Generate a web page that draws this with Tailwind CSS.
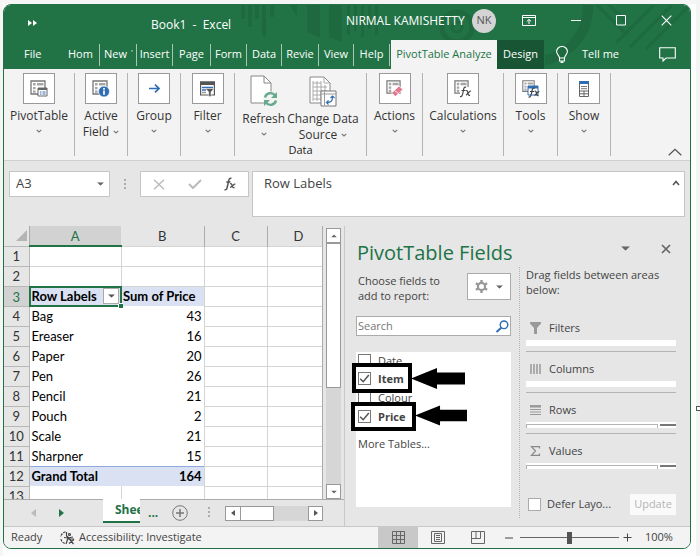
<!DOCTYPE html>
<html lang="en">
<head>
<meta charset="utf-8">
<title>Book1 - Excel</title>
<script src="https://cdn.jsdelivr.net/npm/@tailwindcss/browser@4"></script>
</head>
<body class="relative bg-[#fdfdfd] pt-1 pl-[3px] pr-[9px] pb-[7px] font-['Open_Sans','Noto_Sans',sans-serif] text-xs text-[#444] border-0">
<svg width="0" height="0" class="absolute" aria-hidden="true">
  <defs>
    <symbol id="chev" viewBox="0 0 6 4"><path d="M.7.8 3 3 5.3.8" fill="none" stroke="#777" stroke-width="1.1"/></symbol>
    <symbol id="down" viewBox="0 0 8 4"><path d="M0 0h8L4 4z" fill="currentColor"/></symbol>
    <symbol id="tick" viewBox="0 0 12 12"><path d="M2 6.2 4.8 9 10 2.8" fill="none" stroke="#555" stroke-width="1.4"/></symbol>
    <symbol id="sheet" viewBox="0 0 16 16"><path d="M1 1h14v13H1z" fill="#fff" stroke="#777" stroke-width="1.3"/><path d="M3 3h2.600v2.600H3zM7 3h6.500v2.600H7zM3 7h2.600v2.300H3zM3 10.500h2.600v2.300H3z" fill="#a6a6a6"/></symbol>
  </defs>
</svg>
<div class="absolute inset-x-0 top-0 h-1 bg-[#f5f5f5]"></div>
<div class="absolute inset-y-0 left-0 w-[3px] bg-[#f5f5f5]"></div>
<div class="absolute inset-y-0 right-0 w-1 bg-[#f4f4f4]"></div>
<div class="absolute right-0 top-[406px] h-[5px] w-1 border border-r-0 border-[#555] bg-white"></div>

<div class="relative flex flex-col overflow-hidden rounded-lg border border-[#217346] bg-[#e6e6e6]">
  <header class="relative bg-[#217346] text-white">
    <svg class="absolute right-0 top-0 h-16 w-[460px]" viewBox="0 0 460 64" aria-hidden="true">
      <g fill="#1e693f">
        <path d="M11 0h4v14h-4zM18 0h4v22h-4zM25 0h4v14h-4zM32 0h4v32l-4-2zM40 0h4v12h-4zM60 0h7v12zM77 0h13v33l-13-6zM99 0h13v37l-13-5z"/>
        <path d="M117 0h3v30h-3zM124 0h3v26h-3zM131 0h3v32h-3zM138 0h3v24h-3zM145 0h3v30h-3z"/>
      </g>
      <g fill="none" stroke="#1e693f">
        <circle cx="227" cy="22" r="15" stroke-width="5"/><circle cx="227" cy="22" r="5" stroke-width="3"/>
        <path d="M358 0a54 54 0 0 1-56 56" stroke-width="10"/>
        <path d="M367 0l30 30M379 0l18 18M400 42 442 0M386 38 424 0M416 44 460 0" stroke-width="3"/>
      </g>
    </svg>
    <div class="relative flex h-[35px] items-center">
      <button class="ml-6 w-[123px]" aria-label="More commands"><svg class="h-[6px] w-[9px]" viewBox="0 0 9 6"><path d="M0 0v6l4-3zM5 0v6l4-3z" fill="#fff"/></svg></button>
      <h1 class="w-[195px] whitespace-pre pt-1">Book1  -  Excel</h1>
      <span class="w-[126px] whitespace-nowrap pb-1">NIRMAL KAMISHETTY</span>
      <button class="-mt-1 flex size-6 shrink-0 items-center justify-center rounded-full bg-[#d4d4d4] text-[11px] text-[#555]">NK</button>
      <div class="-mt-1 ml-auto flex items-center pr-[18px]">
        <button class="mr-[35px]" aria-label="Ribbon display options"><svg class="h-[11px] w-[14px]" viewBox="0 0 14 11" fill="none" stroke="#fff"><path d="M.5.5h13v10H.5zM.5 2.5h13M7 9V4.5M4.800 6.500 7 4.400l2.200 2.100"/></svg></button>
        <button class="mr-[35px]" aria-label="Minimize"><svg class="h-[11px] w-[10px]" viewBox="0 0 10 11"><path d="M0 5.500h10" stroke="#fff"/></svg></button>
        <button class="mr-[34px]" aria-label="Maximize"><svg class="size-[11px]" viewBox="0 0 11 11"><path d="M.5.500h9v9.500h-9z" fill="none" stroke="#fff"/></svg></button>
        <button aria-label="Close"><svg class="size-[11px]" viewBox="0 0 11 11"><path d="m.7.7 9.600 9.600m0-9.600L.7 10.300" stroke="#fff" stroke-width="1.100"/></svg></button>
      </div>
    </div>
    <nav class="relative flex h-[29px] items-center whitespace-nowrap text-[11px]">
      <button class="w-[58px] pl-5 text-left">File</button>
      <button class="h-[22px] w-[38px] border-r border-white/60 pl-[6px] text-left">Hom</button>
      <button class="h-[22px] w-[37px] border-r border-white/60 pl-1 text-left">New<span class="ml-1 align-top text-[8px]">'</span></button>
      <button class="h-[22px] w-9 border-r border-white/60 text-center">Insert</button>
      <button class="h-[22px] w-[38px] border-r border-white/60 text-center">Page</button>
      <button class="h-[22px] w-9 border-r border-white/60 text-center">Form</button>
      <button class="h-[22px] w-[35px] border-r border-white/60 text-center">Data</button>
      <button class="h-[22px] w-[37px] border-r border-white/60 text-center">Revie</button>
      <button class="h-[22px] w-[35px] border-r border-white/60 text-center">View</button>
      <button class="h-[22px] w-9 border-r border-white/60 text-center">Help</button>
      <button class="ml-px h-full w-[106px] bg-[#f3f3f3] text-center text-[#217346]">PivotTable Analyze</button>
      <button class="h-full w-12 border-r border-[#217346] bg-[#185535] text-center">Design</button>
      <button class="ml-[11px] flex items-center gap-[14px]"><svg class="h-[17px] w-3" viewBox="0 0 12 17" fill="none" stroke="#fff" stroke-width="1.1"><path d="M3.500 12c0-2.600-2.900-3.300-2.900-6.400a5.400 5.100 0 0 1 10.800 0c0 3.100-2.900 3.800-2.900 6.400zM3.500 12v3h5v-3M4.500 16.400h3"/></svg>Tell me</button>
      <button class="ml-auto mr-[14px]" aria-label="Comments"><svg class="h-[15px] w-[17px]" viewBox="0 0 17 15"><path d="M.7.7h15.600v10.300H7l-3 3v-3H.700z" fill="none" stroke="#fff" stroke-width="1.100"/></svg></button>
    </nav>
  </header>

  <section class="relative flex h-[92px] border-b border-[#d0d0d0] bg-[#f3f3f3] pt-1 pb-1 leading-4 text-[#333]">
    <button class="flex w-[71px] flex-col items-center border-r border-[#b4b4b4]">
      <span class="mb-1 flex h-[31px] w-8 shrink-0 items-center justify-center border border-[#999] bg-white"><svg class="size-[18px]" viewBox="0 0 18 18"><use href="#sheet" width="16" height="16"/><path d="M8 8h9v8H8z" fill="#fff" stroke="#666"/><path d="M8 8h9v2H8z" fill="#666"/><path d="M10 12h1.500m1 0H15.500M10 14h1.500m1 0H15.500" stroke="#2f6eb5"/></svg></span>
      PivotTable<svg class="mt-[5px] h-1 w-[6px]"><use href="#chev"/></svg>
    </button>
    <button class="flex w-[53px] flex-col items-center border-r border-[#b4b4b4]">
      <span class="mb-1 flex h-[31px] w-8 shrink-0 items-center justify-center border border-[#999] bg-white"><svg class="size-[18px]" viewBox="0 0 18 18"><use href="#sheet" width="16" height="16"/><circle cx="12" cy="11.500" r="5.500" fill="#2f6eb5" stroke="#fff" stroke-width=".7"/><path d="M12 8v1.700M12 10.500v4.200" stroke="#fff" stroke-width="1.700"/></svg></span>
      Active<span class="flex items-center gap-1">Field <svg class="h-1 w-[6px]"><use href="#chev"/></svg></span>
    </button>
    <button class="flex w-[53px] flex-col items-center border-r border-[#b4b4b4]">
      <span class="mb-1 flex h-[31px] w-8 shrink-0 items-center justify-center border border-[#999] bg-white"><svg class="h-[9px] w-[11px]" viewBox="0 0 11 9"><path d="M0 4.500h10M6 .700l4 3.800-4 3.800" fill="none" stroke="#2f6eb5" stroke-width="1.700"/></svg></span>
      Group<svg class="mt-[5px] h-1 w-[6px]"><use href="#chev"/></svg>
    </button>
    <button class="flex w-[54px] flex-col items-center border-r border-[#b4b4b4]">
      <span class="mb-1 flex h-[31px] w-8 shrink-0 items-center justify-center border border-[#999] bg-white"><svg class="h-4 w-[15px]" viewBox="0 0 15 16"><path d="M.6 1h13.800v13H.600z" fill="#fff" stroke="#555" stroke-width="1.200"/><path d="M0 .400h15V4H0z" fill="#555"/><path d="M2 6.500h11M2 9h4" stroke="#2f6eb5" stroke-width="1.300"/><path d="M2 11.500h4" stroke="#999" stroke-width="1.300"/><path d="M5.500 7.500H14l-3 3.500v4.500H8.700V11z" fill="#555" stroke="#fff" stroke-width=".5"/></svg></span>
      Filter<svg class="mt-[5px] h-1 w-[6px]"><use href="#chev"/></svg>
    </button>
    <div class="flex w-[132px] flex-col border-r border-[#b4b4b4]">
      <div class="flex flex-1 justify-center gap-[2px] whitespace-nowrap pt-[2px]">
        <button class="flex flex-col items-center">
          <svg class="mb-1 h-8 w-7 shrink-0" viewBox="0 0 28 32"><path d="M1 1h13l7 7v20H1z" fill="#fff" stroke="#888"/><path d="M14 1v7h7" fill="none" stroke="#888"/><circle cx="20.500" cy="24" r="7.500" fill="#f3f3f3"/><path d="M15 22.500a5.600 5.600 0 0 1 10-2M26 25.500a5.600 5.600 0 0 1-10 2" fill="none" stroke="#66a98c" stroke-width="2.400"/><path d="M27 17v6h-6zM14 31v-6h6z" fill="#66a98c"/></svg>
          Refresh<svg class="mt-[5px] h-1 w-[6px]"><use href="#chev"/></svg>
        </button>
        <button class="flex flex-col items-center">
          <svg class="mb-1 h-8 w-7 shrink-0" viewBox="0 0 28 32"><path d="M1 2h14l6 6v20H1z" fill="#fff" stroke="#888"/><path d="M15 2v6h6M4 8h8M4 12h14M4 16h14M4 20h10M4 24h8M4 6v20M8 6v20M12 6v20M16 10v10" fill="none" stroke="#aaa"/><path d="M12 16h15v15H12z" fill="#fff" stroke="#777"/><path d="M12.500 19h14M15.500 16.500v14" stroke="#999"/><path d="M18 27.500c4.500 0 5.500-1.500 5.500-6M21.500 23l2-2 2 2M19.500 25.500l-2 2 2 2" fill="none" stroke="#2f6eb5" stroke-width="1.200"/></svg>
          Change Data<span class="flex items-center gap-1">Source <svg class="h-1 w-[6px]"><use href="#chev"/></svg></span>
        </button>
      </div>
      <div class="text-center text-[11px] leading-3 text-[#222]">Data</div>
    </div>
    <button class="flex w-[56px] flex-col items-center border-r border-[#b4b4b4]">
      <span class="mb-1 flex h-[31px] w-8 shrink-0 items-center justify-center border border-[#999] bg-white"><svg class="size-[17px]" viewBox="0 0 17 17"><use href="#sheet" width="15" height="15"/><path d="m5.500 13 7.500-7 4 3.500-7.500 7z" fill="#e2798d" stroke="#fff" stroke-width=".8"/><path d="m8.500 10.500 4 3" stroke="#fff" stroke-width=".8"/></svg></span>
      Actions<svg class="mt-[5px] h-1 w-[6px]"><use href="#chev"/></svg>
    </button>
    <button class="flex w-[81px] flex-col items-center border-r border-[#b4b4b4]">
      <span class="mb-1 flex h-[31px] w-8 shrink-0 items-center justify-center border border-[#999] bg-white"><svg class="size-[18px]" viewBox="0 0 18 18"><use href="#sheet" width="15" height="15"/><path d="M6 7h12v10H6z" fill="#fff"/><path d="M6 16.500c1.800.5 2.400-1 2.800-3l.9-4.500c.4-1.600 1.200-2.200 2.500-1.700M7.500 10.500h4M12 10.800c1.500-.6 1.600.6 2 2.500.4 2 .8 2.400 2 1.800M16.800 10.800c-1.600.2-3.200 3.800-4.800 4.300" fill="none" stroke="#444" stroke-width="1.200"/></svg></span>
      Calculations<svg class="mt-[5px] h-1 w-[6px]"><use href="#chev"/></svg>
    </button>
    <button class="flex w-[54px] flex-col items-center border-r border-[#b4b4b4]">
      <span class="mb-1 flex h-[31px] w-8 shrink-0 items-center justify-center border border-[#999] bg-white"><svg class="size-[18px]" viewBox="0 0 18 18"><use href="#sheet" width="13" height="13"/><path d="M6 6h10v9H6z" fill="#fff" stroke="#2f6eb5"/><path d="M6 6h10v2.500H6z" fill="#2f6eb5"/><path d="M6.500 17c1.800.5 2.400-1 2.800-3l.9-4c.4-1.600 1.200-2.200 2.500-1.700M8 11.500h4M12.500 11.300c1.500-.6 1.600.6 2 2.300.4 1.900.8 2.400 2 1.800M17.300 11.300c-1.600.2-3.200 3.600-4.800 4.100" fill="none" stroke="#444" stroke-width="1.200"/></svg></span>
      Tools<svg class="mt-[5px] h-1 w-[6px]"><use href="#chev"/></svg>
    </button>
    <button class="flex w-[53px] flex-col items-center border-r border-[#b4b4b4]">
      <span class="mb-1 flex h-[31px] w-8 shrink-0 items-center justify-center border border-[#999] bg-white"><svg class="h-4 w-[10px]" viewBox="0 0 10 16"><path d="M.5.5h9v15h-9z" fill="#fff" stroke="#666"/><path d="M0 0h10v3H0z" fill="#2f6eb5"/><path d="M2 5.500h6M2 7.700h6" stroke="#777"/><path d="M.5 10h9M.5 12.800h9M5 10v5" stroke="#666"/></svg></span>
      Show<svg class="mt-[5px] h-1 w-[6px]"><use href="#chev"/></svg>
    </button>
    <button class="ml-auto mr-2 self-end" aria-label="Collapse the ribbon"><svg class="h-2 w-[14px]" viewBox="0 0 14 8"><path d="m.7 7.300 6.300-6 6.300 6" fill="none" stroke="#555" stroke-width="1.300"/></svg></button>
  </section>

  <section class="flex h-[65px] items-start pl-[5px] pr-[5px] pt-[10px]">
    <div class="flex h-[26px] w-[101px] items-center border border-[#c6c6c6] bg-white pr-[5px]">
      <input class="w-full min-w-0 flex-1 bg-transparent pl-[6px] text-[13px]" value="A3" aria-label="Name box">
      <button aria-label="Names" class="text-[#666]"><svg class="h-1 w-[7px]" viewBox="0 0 8 4"><use href="#down"/></svg></button>
    </div>
    <svg class="mx-[13px] h-[26px] w-1" viewBox="0 0 4 26"><path d="M1 8h2v2H1zM1 12h2v2H1zM1 16h2v2H1z" fill="#aaa"/></svg>
    <div class="flex h-[26px] w-[109px] items-center justify-between border border-[#c6c6c6] bg-white pl-3 pr-3">
      <button aria-label="Cancel"><svg class="h-[11px] w-3" viewBox="0 0 12 11"><path d="m1 .700 10 9.600M11 .700 1 10.300" stroke="#bbb" stroke-width="1.400"/></svg></button>
      <button aria-label="Enter"><svg class="h-[10px] w-[14px]" viewBox="0 0 14 10"><path d="m1 5 4 4 8-8" fill="none" stroke="#bbb" stroke-width="2"/></svg></button>
      <button aria-label="Insert function"><svg class="h-[14px] w-3" viewBox="0 0 12 14" fill="none" stroke="#555"><path d="M.5 12.700c1.700.6 2.400-.8 2.800-2.700L4.700 3.500C5.100 1.700 6 .8 7.500 1.400M2.300 5h4.200" stroke-width="1.500"/><path d="M6 6.800c1.500-.6 1.800.5 2.200 2 .4 1.700 1 2.200 2.300 1.600M11.300 6.800c-1.700.2-3.300 3.200-5.300 3.600" stroke-width="1.300"/></svg></button>
    </div>
    <div class="ml-[3px] flex h-[46px] flex-1 items-start border border-[#c6c6c6] bg-white">
      <input class="min-w-0 flex-1 bg-transparent pl-[11px] pt-[3px] text-[13px]" value="Row Labels" aria-label="Formula bar">
      <button class="mr-1 mt-2" aria-label="Collapse formula bar"><svg class="block h-[6px] w-2" viewBox="0 0 8 6"><path d="m1 5 3-3.500L7 5" fill="none" stroke="#555" stroke-width="1.600"/></svg></button>
    </div>
  </section>

  <main class="flex h-[300px]">
    <section class="flex w-[341px] flex-col border-r border-[#c8c8c8]">
      <div class="flex h-[274px] border-b border-[#ababab]">
        <div class="w-[319px] overflow-hidden border-r border-[#ababab]">
          <table class="w-[326px] table-fixed border-collapse text-black font-[Lato,'Open_Sans',sans-serif] text-[13px] leading-4">
            <colgroup><col class="w-[25px]"><col class="w-[92px]"><col class="w-[83px]"><col class="w-[63px]"><col></colgroup>
            <thead><tr class="h-5 border-b border-[#ababab] text-[#333]">
              <th class="border-r border-[#ababab] p-0"><svg class="ml-auto mr-[2px] size-[11px]" viewBox="0 0 11 11"><path d="M11 0v11H0z" fill="#b4b4b4"/></svg></th>
              <th class="border-b-2 border-b-[#217346] bg-[#d2d2d2] p-0 font-normal text-[#217346]">A</th>
              <th class="border-r border-[#ababab] p-0 font-normal">B</th>
              <th class="border-r border-[#ababab] p-0 font-normal">C</th>
              <th class="p-0 font-normal">D</th>
            </tr></thead>
            <tbody class="bg-white [&_th]:bg-[#e6e6e6] [&_th]:border [&_th]:border-l-0 [&_th]:border-[#b8b8b8] [&_th]:p-0 [&_th]:font-normal [&_th]:text-[#333] [&_td]:h-5 [&_td]:px-[2px] [&_td]:py-0">
              <tr><th>1</th><td class="border border-[#d4d4d4]"></td><td class="border border-[#d4d4d4]"></td><td class="border border-[#d4d4d4]"></td><td class="border border-[#d4d4d4]"></td></tr>
              <tr><th>2</th><td class="border border-[#d4d4d4]"></td><td class="border border-[#d4d4d4]"></td><td class="border border-[#d4d4d4]"></td><td class="border border-[#d4d4d4]"></td></tr>
              <tr class="font-bold"><th><span class="block h-[19px] bg-[#d2d2d2] leading-5 text-[#217346]">3</span></th>
                <td class="relative bg-[#d9e1f2]"><div class="absolute -inset-px border-2 border-[#217346]"></div><div class="absolute -bottom-[2px] -right-[2px] size-[5px] border-l border-t border-white bg-[#217346]"></div><div class="flex items-center justify-between whitespace-nowrap"><span>Row Labels</span><button class="relative flex h-4 w-4 items-center justify-center border border-[#aaa] bg-white text-[#555]" aria-label="Filter row labels"><svg class="h-1 w-[7px]" viewBox="0 0 8 4"><use href="#down"/></svg></button></div></td>
                <td class="whitespace-nowrap bg-[#d9e1f2] text-left">Sum of Price</td><td class="border border-[#d4d4d4]"></td><td class="border border-[#d4d4d4]"></td></tr>
              <tr><th>4</th><td>Bag</td><td class="text-right">43</td><td class="border border-[#d4d4d4]"></td><td class="border border-[#d4d4d4]"></td></tr>
              <tr><th>5</th><td>Ereaser</td><td class="text-right">16</td><td class="border border-[#d4d4d4]"></td><td class="border border-[#d4d4d4]"></td></tr>
              <tr><th>6</th><td>Paper</td><td class="text-right">20</td><td class="border border-[#d4d4d4]"></td><td class="border border-[#d4d4d4]"></td></tr>
              <tr><th>7</th><td>Pen</td><td class="text-right">26</td><td class="border border-[#d4d4d4]"></td><td class="border border-[#d4d4d4]"></td></tr>
              <tr><th>8</th><td>Pencil</td><td class="text-right">21</td><td class="border border-[#d4d4d4]"></td><td class="border border-[#d4d4d4]"></td></tr>
              <tr><th>9</th><td>Pouch</td><td class="text-right">2</td><td class="border border-[#d4d4d4]"></td><td class="border border-[#d4d4d4]"></td></tr>
              <tr><th>10</th><td>Scale</td><td class="text-right">21</td><td class="border border-[#d4d4d4]"></td><td class="border border-[#d4d4d4]"></td></tr>
              <tr><th>11</th><td>Sharpner</td><td class="text-right">15</td><td class="border border-[#d4d4d4]"></td><td class="border border-[#d4d4d4]"></td></tr>
              <tr class="font-bold"><th>12</th><td class="border-t border-[#8ea9db] bg-[#d9e1f2]">Grand Total</td><td class="border-t border-[#8ea9db] bg-[#d9e1f2] text-right">164</td><td class="border border-[#d4d4d4]"></td><td class="border border-[#d4d4d4]"></td></tr>
              <tr><th>13</th><td class="border-r border-[#d4d4d4]"></td><td class="border-r border-[#d4d4d4]"></td><td class="border border-[#d4d4d4]"></td><td class="border border-[#d4d4d4]"></td></tr>
            </tbody>
          </table>
        </div>
        <div class="ml-[3px] mt-[2px] flex w-[15px] flex-col bg-[#d6d6d6]">
          <button class="flex h-[15px] items-center justify-center border border-[#999] bg-white text-[#666]" aria-label="Scroll up"><svg class="h-1 w-[6px] rotate-180" viewBox="0 0 8 4"><use href="#down"/></svg></button>
          <div class="h-[145px] border border-[#999] bg-white"></div>
          <button class="mt-auto flex h-[15px] items-center justify-center border border-[#999] bg-white text-[#666]" aria-label="Scroll down"><svg class="h-1 w-[6px]" viewBox="0 0 8 4"><use href="#down"/></svg></button>
        </div>
      </div>
      <div class="flex flex-1 items-center">
        <button class="ml-[27px]" aria-label="Previous sheet"><svg class="h-2 w-[5px]" viewBox="0 0 5 8"><path d="M5 0v8L0 4z" fill="#bbb"/></svg></button>
        <button class="ml-[23px]" aria-label="Next sheet"><svg class="h-2 w-[5px]" viewBox="0 0 5 8"><path d="M0 0v8l5-4z" fill="#217346"/></svg></button>
        <button class="-mt-px ml-[39px] h-6 w-[37px] self-start overflow-hidden whitespace-nowrap border-b-2 border-[#217346] bg-white pl-3 text-left font-bold text-[#217346]">Shee</button>
        <button class="ml-2 text-xs font-bold leading-4 text-[#217346]">...</button>
        <button class="ml-[14px]" aria-label="New sheet"><svg class="size-4" viewBox="0 0 16 16" fill="none" stroke="#777"><circle cx="8" cy="8" r="7.300"/><path d="M8 4v8M4 8h8" stroke-width="1.500"/></svg></button>
        <svg class="ml-auto mr-[14px] h-[14px] w-[3px]" viewBox="0 0 3 14"><path d="M0 1h2v2H0zM0 5h2v2H0zM0 9h2v2H0z" fill="#aaa"/></svg>
        <div class="mr-[21px] flex h-[15px] w-[98px] bg-[#d6d6d6]">
          <button class="flex w-4 items-center justify-center border border-[#999] bg-white" aria-label="Scroll left"><svg class="h-[6px] w-1" viewBox="0 0 4 6"><path d="M4 0v6L0 3z" fill="#555"/></svg></button>
          <div class="w-[33px] border border-l-0 border-[#999] bg-white"></div>
          <button class="ml-auto flex w-[15px] items-center justify-center border border-[#999] bg-white" aria-label="Scroll right"><svg class="h-[6px] w-1" viewBox="0 0 4 6"><path d="M0 0v6l4-3z" fill="#555"/></svg></button>
        </div>
      </div>
    </section>

    <aside class="flex flex-1 flex-col pl-[11px] pr-[14px] pt-3 text-[11px]">
      <div class="flex h-[29px] items-center text-[#666]">
        <h2 class="flex-1 pl-px text-[20px] leading-7 text-[#217346]">PivotTable Fields</h2>
        <button class="-mt-2 mr-[31px]" aria-label="Pane options"><svg class="block h-[5px] w-[9px]" viewBox="0 0 8 4"><use href="#down"/></svg></button>
        <button class="-mt-2 mr-[5px]" aria-label="Close pane"><svg class="block size-[10px]" viewBox="0 0 10 10"><path d="m1 1 8 8m0-8L1 9" stroke="#666" stroke-width="1.700"/></svg></button>
      </div>
      <div class="flex flex-1">
        <div class="flex w-[155px] flex-col">
          <div class="mt-[6px] flex justify-between leading-[15px]">
            <p class="w-[100px] whitespace-nowrap pl-[2px]">Choose fields to<br>add to report:</p>
            <button class="flex h-[27px] w-11 items-center justify-center gap-2 border border-[#ababab] bg-white text-[#666]" aria-label="Tools"><svg class="size-[13px]" viewBox="0 0 13 13"><circle cx="6.500" cy="6.500" r="3.600" fill="none" stroke="#999" stroke-width="2.200"/><path d="M6.500 0v2.500M6.500 10.500V13M.9 3.200l2.200 1.300M9.900 8.500l2.200 1.300M.9 9.800l2.200-1.300M9.900 4.500l2.200-1.300" stroke="#999" stroke-width="2.400"/></svg><svg class="h-1 w-[7px]" viewBox="0 0 8 4"><use href="#down"/></svg></button>
          </div>
          <div class="mt-[13px] flex h-5 items-center border border-[#ababab] bg-white px-[1px]">
            <input class="w-full min-w-0 flex-1 placeholder:text-[#777]" placeholder="Search" aria-label="Search fields">
            <svg class="h-[13px] w-[14px] shrink-0" viewBox="0 0 14 13" fill="none" stroke="#2f6eb5"><circle cx="9" cy="4.800" r="3.800" stroke-width="1.400"/><path d="M6.300 7.700 1.500 12" stroke-width="2"/></svg>
          </div>
          <div class="mt-4 h-[155px] bg-white pl-[2px] leading-[19px]">
            <label class="flex h-[17px] items-center gap-[7px]"><input type="checkbox" class="size-[13px] appearance-none border border-[#777] bg-white">Date</label>
            <label class="relative z-10 flex h-[19px] items-center gap-[7px] font-bold"><span class="absolute -left-[6px] -top-[6px] h-[30px] w-[60px] border-[4px] border-black bg-white"></span><svg class="absolute left-[53px] -top-px h-[21px] w-[54px]" viewBox="0 0 54 21"><path d="M0 10.500 26 0v4.500h28v12H26V21z"/></svg><span class="relative size-[13px]"><input type="checkbox" checked class="absolute size-[13px] appearance-none border border-[#777] bg-white"><svg class="pointer-events-none absolute size-[13px]"><use href="#tick"/></svg></span><span class="relative">Item</span></label>
            <label class="flex h-[19px] items-center gap-[7px]"><input type="checkbox" class="size-[13px] appearance-none border border-[#777] bg-white">Colour</label>
            <label class="relative z-10 flex h-[19px] items-center gap-[7px] font-bold"><span class="absolute -left-[7px] -top-[5px] h-[29px] w-[65px] border-[4px] border-black bg-white"></span><svg class="absolute left-[57px] -top-[2px] h-[21px] w-[52px]" viewBox="0 0 54 21"><path d="M0 10.500 26 0v4.500h28v12H26V21z"/></svg><span class="relative size-[13px]"><input type="checkbox" checked class="absolute size-[13px] appearance-none border border-[#777] bg-white"><svg class="pointer-events-none absolute size-[13px]"><use href="#tick"/></svg></span><span class="relative">Price</span></label>
            <a href="#" class="mt-2 block">More Tables...</a>
          </div>
        </div>
        <div class="mb-2 ml-2 w-px border-l border-dotted border-[#b4b4b4]"></div>
        <div class="flex flex-1 flex-col pl-[6px]">
          <p class="h-[49px] leading-[15px]">Drag fields between areas below:</p>
          <div class="flex h-6 items-center gap-[8px] pl-1"><svg class="h-3 w-[11px]" viewBox="0 0 11 12"><path d="M0 0h11v1.500L7 6v6H4V6L0 1.500z" fill="#999"/></svg>Filters</div>
          <div class="h-[6px] bg-white"></div><div class="h-[6px] border-b border-[#b4b4b4]"></div>
          <div class="mt-[5px] flex h-6 items-center gap-[8px] pl-1"><svg class="h-[10px] w-[11px]" viewBox="0 0 11 10"><path d="M1 0v10M4 0v10M7 0v10M10 0v10" stroke="#999" stroke-width="1.500"/></svg>Columns</div>
          <div class="h-[6px] bg-white"></div><div class="h-[6px] border-b border-[#b4b4b4]"></div>
          <div class="mt-[5px] flex h-6 items-center gap-[8px] pl-1"><svg class="h-[10px] w-[11px]" viewBox="0 0 11 10"><path d="M0 1.300h11" stroke="#999" stroke-width="2.500"/><path d="M0 4.500h11M0 7h11M0 9.500h11" stroke="#999"/></svg>Rows</div>
          <div class="flex h-[6px] bg-white pt-[2px]"><div class="flex-1 border border-b-0 border-[#b4b4b4]"></div><div class="ml-[2px] h-[2px] w-4 bg-[#777]"></div></div><div class="h-[6px] border-b border-[#b4b4b4]"></div>
          <div class="mt-[5px] flex h-6 items-center gap-[8px] pl-1"><svg class="h-[10px] w-[11px]" viewBox="0 0 11 10"><path d="M9.500 2.500V.700H1.500L5.500 5l-4 4.300h8V7.500" fill="none" stroke="#888" stroke-width="1.200"/></svg>Values</div>
          <div class="flex h-[6px] bg-white pt-[2px]"><div class="flex-1 border border-b-0 border-[#b4b4b4]"></div><div class="ml-[2px] h-[2px] w-4 bg-[#777]"></div></div>
          <div class="mt-[25px] flex items-center justify-between"><label class="flex items-center gap-[6px] whitespace-nowrap pl-[2px]"><input type="checkbox" class="size-[13px] appearance-none border border-[#ababab] bg-white">Defer Layo...</label><button disabled class="h-[21px] w-[46px] bg-[#fafafa] text-[#b4b4b4]">Update</button></div>
        </div>
      </div>
    </aside>
  </main>

  <footer class="flex h-[22px] items-center border-t border-[#c8c8c8] bg-[#f3f3f3] text-[11px]">
    <span class="w-14 pl-[7px]">Ready</span>
    <button class="flex items-center gap-1 whitespace-nowrap"><svg class="h-[14px] w-[15px]" viewBox="0 0 15 14" fill="none" stroke="#444" stroke-width="1.200"><path d="M5.500.8A5.800 5.800 0 0 0 .8 6M.9 8a5.800 5.800 0 0 0 4.300 4.500" stroke-dasharray="2.500 1"/><path d="M6.500 1v4l2 1.500M4 6.500l4 .5L13 6M8 7l-2 6M9 7.500l4.500 5.500M8 8l6 0M9 12.500 14 8.500"/><circle cx="9.500" cy="3.500" r="1"/></svg>Accessibility: Investigate</button>
    <div class="ml-auto flex h-full items-center">
      <button class="flex h-full w-10 items-center justify-center bg-[#c8c8c8]" aria-label="Normal view"><svg class="size-[13px]" viewBox="0 0 13 13"><path d="M.5.5h12v12H.500zM4.500.5v12M8.500.5v12M.5 4.500h12M.5 8.500h12" fill="none" stroke="#666"/></svg></button>
      <button class="flex h-full w-10 items-center justify-center" aria-label="Page layout"><svg class="h-[13px] w-[14px]" viewBox="0 0 14 13"><path d="M.5.500h13v12H.500zM3.500 2.500h7v8h-7zM5 4.500h4M5 6.500h4M5 8.500h4" fill="none" stroke="#666"/></svg></button>
      <button class="flex h-full w-10 items-center justify-center" aria-label="Page break preview"><svg class="h-[13px] w-[14px]" viewBox="0 0 14 13"><path d="M.5.500h13v12H.500zM.5 7.500h9v-7M5 .500v7" fill="none" stroke="#666"/></svg></button>
      <button class="ml-1 w-[14px]" aria-label="Zoom out"><svg class="mx-auto h-2 w-2" viewBox="0 0 8 8"><path d="M0 4h8" stroke="#444"/></svg></button>
      <input type="range" aria-label="Zoom" class="mx-[4px] h-3 w-[99px] appearance-none bg-[linear-gradient(#666,#666)] bg-[length:100%_1px] bg-center bg-no-repeat [&::-webkit-slider-thumb]:h-3 [&::-webkit-slider-thumb]:w-[5px] [&::-webkit-slider-thumb]:appearance-none [&::-webkit-slider-thumb]:bg-[#555]">
      <button aria-label="Zoom in"><svg class="size-[9px]" viewBox="0 0 9 9"><path d="M.5 4.500h8M4.500.500v8" stroke="#444"/></svg></button>
      <span class="w-[58px] pl-[13px]">100%</span>
    </div>
  </footer>
</div>
</body>
</html>
